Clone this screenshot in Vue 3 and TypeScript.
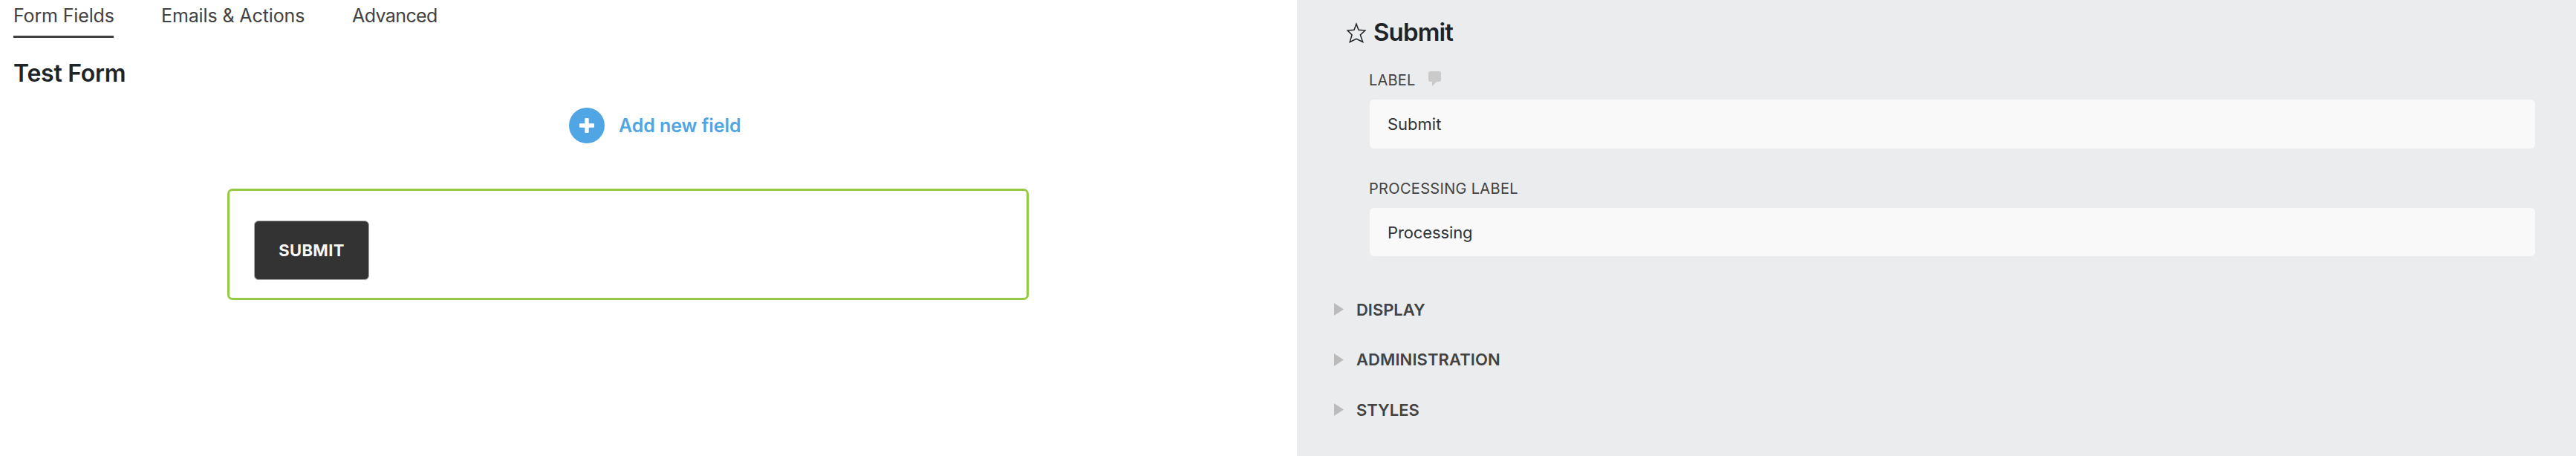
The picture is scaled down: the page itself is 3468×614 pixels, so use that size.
<script setup lang="ts">
import { ref } from 'vue'

const tabs = [
  { id: 'fields', label: 'Form Fields' },
  { id: 'emails', label: 'Emails & Actions' },
  { id: 'advanced', label: 'Advanced' },
]
const activeTab = ref('fields')
const label = ref('Submit')
const processing = ref('Processing')
const sections = [
  { id: 'display', title: 'DISPLAY' },
  { id: 'administration', title: 'ADMINISTRATION' },
  { id: 'styles', title: 'STYLES' },
]
</script>

<template>
  <div class="builder">
    <main class="editor">
      <nav class="tabs">
        <a
          v-for="tab in tabs"
          :key="tab.id"
          :class="['tab', tab.id, { active: tab.id === activeTab }]"
          @click="activeTab = tab.id"
        >{{ tab.label }}</a>
      </nav>
      <h1 class="form-title">Test Form</h1>
      <div class="add-row">
        <svg class="add-icon" viewBox="0 0 48 48">
          <circle cx="24" cy="24" r="24" fill="#50a5e4" />
          <rect x="21.3" y="14" width="5.4" height="20" rx="1" fill="#fff" />
          <rect x="14" y="21.3" width="20" height="5.4" rx="1" fill="#fff" />
        </svg>
        <span class="add-text">Add new field</span>
      </div>
      <div class="field-box">
        <button class="submit" type="button">SUBMIT</button>
      </div>
    </main>

    <aside class="settings">
      <header class="settings-head">
        <svg class="star" viewBox="0 0 28 28">
          <path
            d="M14 2.2 L17 10.2 L25.8 11 L19.4 17 L22.7 26.5 L14 22.3 L5.3 26.5 L8.1 17 L2.2 11 L11 10.2 Z"
            fill="none" stroke="#1d2327" stroke-width="1.5"
          />
        </svg>
        <h2 class="settings-title">Submit</h2>
      </header>
      <div class="group first">
        <div class="caption">
          <span class="label-text">LABEL</span>
          <svg class="bubble" viewBox="0 0 17 20">
            <path d="M2.5 0H14.5Q17 0 17 2.5V11.5Q17 14 14.5 14H11.2L5 20V14H2.5Q0 14 0 11.5V2.5Q0 0 2.5 0Z" fill="#cacaca" />
          </svg>
        </div>
        <input v-model="label" class="text-input tall" type="text" />
      </div>
      <div class="group second">
        <div class="caption"><span class="processing-text">PROCESSING LABEL</span></div>
        <input v-model="processing" class="text-input processing-input" type="text" />
      </div>
      <div class="sections">
        <div v-for="s in sections" :key="s.id" :class="['section', s.id]">
          <svg class="arrow" viewBox="0 0 13 17"><path d="M0 0L13 8.5L0 17Z" fill="#bbb" /></svg>
          <span>{{ s.title }}</span>
        </div>
      </div>
    </aside>
  </div>
</template>

<style>
body { margin: 0; }
</style>

<style scoped>
.builder {
  display: flex;
  width: 3468px;
  height: 614px;
  overflow: hidden;
  background: #fff;
  font-family: Inter, "Liberation Sans", sans-serif;
  color: #424242;
}
.editor {
  box-sizing: border-box;
  width: 1746px;
  padding-left: 18px;
}
.tabs { display: flex; gap: 64px; }
.tab {
  height: 48px;
  font-size: 25px;
  line-height: 42px;
  white-space: nowrap;
  cursor: pointer;
}
.tab.active { border-bottom: 3px solid #424242; }
.tab.fields { width: 135px; letter-spacing: -0.15px; }
.tab.emails { width: 193px; letter-spacing: -0.12px; }
.tab.advanced { letter-spacing: -0.6px; }
.form-title {
  margin: 28px 0 0;
  font-size: 32px;
  line-height: 40px;
  font-weight: 600;
  letter-spacing: -0.25px;
  color: #1d2327;
}
.add-row {
  display: flex;
  align-items: center;
  margin: 26px 0 0 748px;
  height: 48px;
}
.add-icon { width: 48px; height: 48px; }
.add-text {
  margin-left: 19px;
  font-size: 25px;
  line-height: 48px;
  font-weight: 600;
  letter-spacing: -0.09px;
  color: #50a5e4;
}
.field-box {
  box-sizing: border-box;
  display: flex;
  width: 1079px;
  height: 150px;
  margin: 61px 0 0 288px;
  padding: 40px 33px;
  border: 3px solid #96ca45;
  border-radius: 7px;
}
.submit {
  box-sizing: border-box;
  width: 155px;
  height: 80px;
  padding: 0;
  border: 1px solid #aaa;
  border-radius: 6px;
  background: #333;
  color: #f7f7f7;
  font-family: inherit;
  font-size: 22px;
  font-weight: 700;
  letter-spacing: 0.35px;
}
.settings {
  box-sizing: border-box;
  flex: 1;
  padding: 23px 55px 0 50px;
  background: #ebecee;
}
.settings-head {
  display: flex;
  align-items: center;
  padding-left: 16px;
  height: 42px;
}
.star { width: 28px; height: 28px; }
.settings-title {
  margin: 0 0 0 9px;
  padding-bottom: 2px;
  font-size: 33px;
  line-height: 40px;
  font-weight: 600;
  letter-spacing: -0.85px;
  color: #1d2327;
}
.group { margin-left: 48px; }
.group.first { margin-top: 29px; }
.group.second { margin-top: 40px; }
.caption {
  display: flex;
  height: 40px;
  font-size: 20px;
  line-height: 29px;
}
.label-text { width: 79px; letter-spacing: 0.2px; margin-left: -1px; }
.processing-text { letter-spacing: 0.32px; margin-left: -1px; }
.bubble { width: 17px; height: 20px; margin: 2px 0 0 1px; }
.text-input {
  box-sizing: border-box;
  display: block;
  width: 1569px;
  height: 65px;
  padding: 0 24px;
  border: 0;
  border-radius: 6px;
  outline: 0;
  background: #f9f9f9;
  font-family: inherit;
  font-size: 22px;
  color: #2c3338;
}
.text-input.tall { height: 66px; }
.processing-input { letter-spacing: -0.12px; }
.sections { padding-top: 38px; }
.section {
  display: flex;
  align-items: center;
  height: 67.5px;
  font-size: 22px;
  line-height: 30px;
  font-weight: 600;
}
.section.display { letter-spacing: -0.05px; }
.section.administration { letter-spacing: 0.08px; }
.arrow { width: 13px; height: 17px; margin-right: 17px; }
</style>
